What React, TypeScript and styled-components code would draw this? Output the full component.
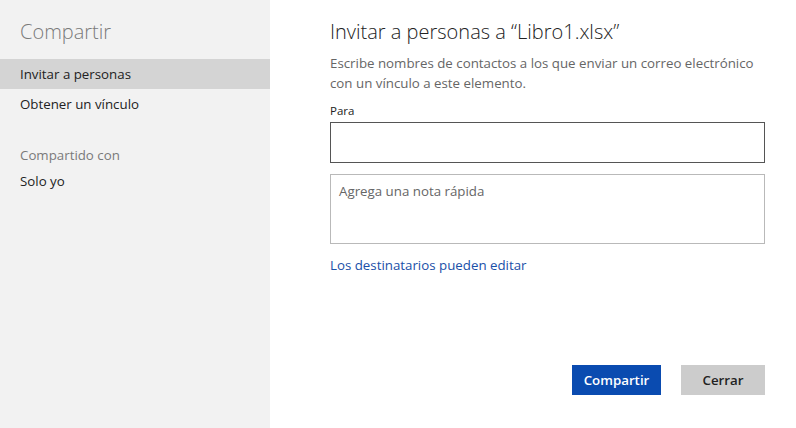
import { createGlobalStyle, styled } from 'styled-components';

const GlobalStyle = createGlobalStyle`
  html, body {
    margin: 0;
    padding: 0;
    background: #ffffff;
  }
  body {
    font-family: 'Open Sans', 'Noto Sans', sans-serif;
  }
  * {
    box-sizing: border-box;
  }
`;

const Page = styled.div`
  display: flex;
  width: 796px;
  height: 428px;
  overflow: hidden;
`;

const Sidebar = styled.nav`
  width: 270px;
  flex-shrink: 0;
  background: #f2f2f2;
  display: flex;
  flex-direction: column;
  padding-top: 16px;
`;

const SideTitle = styled.h2`
  margin: 0 0 11px 20px;
  font-size: 20px;
  font-weight: 300;
  line-height: 32px;
  color: #7a7a7a;
`;

const NavItem = styled.div<{ $active?: boolean }>`
  height: 30px;
  display: flex;
  align-items: center;
  padding-left: 20px;
  font-size: 13.3px;
  color: #222;
  background: ${(p) => (p.$active ? '#d4d4d4' : 'transparent')};
`;

const SectionLabel = styled.div`
  margin: 26px 0 0 20px;
  font-size: 13.3px;
  color: #7a7a7a;
  line-height: 20px;
`;

const SectionValue = styled.div`
  margin: 6px 0 0 20px;
  font-size: 13.3px;
  color: #222;
  line-height: 20px;
`;

const Main = styled.main`
  flex: 1;
  padding: 16px 31px 0 60px;
  display: flex;
  flex-direction: column;
`;

const Title = styled.h1`
  margin: 0;
  font-size: 20px;
  font-weight: 300;
  line-height: 32px;
  color: #222;
`;

const Description = styled.p`
  margin: 5px 0 0;
  font-size: 13.3px;
  line-height: 20px;
  color: #666;
`;

const Label = styled.label`
  display: block;
  margin-top: 10px;
  font-size: 11.5px;
  line-height: 16px;
  color: #222;
`;

const ToField = styled.div`
  margin-top: 3px;
  height: 41px;
  border: 1px solid #555;
  background: #fff;
`;

const NoteField = styled.div`
  margin-top: 11px;
  height: 70px;
  border: 1px solid #b9b9b9;
  padding: 6px 8px;
  font-size: 13.3px;
  line-height: 20px;
  color: #666;
`;

const EditLink = styled.a`
  display: block;
  margin-top: 11px;
  font-size: 13.3px;
  line-height: 20px;
  color: #1a50a8;
  text-decoration: none;
`;

const Actions = styled.div`
  margin-top: auto;
  margin-bottom: 33px;
  display: flex;
  justify-content: flex-end;
  gap: 20px;
`;

const Button = styled.button<{ $primary?: boolean }>`
  height: 30px;
  border: none;
  padding: 0;
  width: ${(p) => (p.$primary ? '89px' : '84px')};
  font-family: inherit;
  font-size: 13.3px;
  font-weight: 600;
  color: ${(p) => (p.$primary ? '#fff' : '#222')};
  background: ${(p) => (p.$primary ? '#0a4bb0' : '#cccccc')};
`;

export default function App() {
  return (
    <>
      <GlobalStyle />
      <Page>
        <Sidebar>
          <SideTitle>Compartir</SideTitle>
          <NavItem $active>Invitar a personas</NavItem>
          <NavItem>Obtener un vínculo</NavItem>
          <SectionLabel>Compartido con</SectionLabel>
          <SectionValue>Solo yo</SectionValue>
        </Sidebar>
        <Main>
          <Title>Invitar a personas a “Libro1.xlsx”</Title>
          <Description>
            Escribe nombres de contactos a los que enviar un correo electrónico
            <br />
            con un vínculo a este elemento.
          </Description>
          <Label>Para</Label>
          <ToField />
          <NoteField>Agrega una nota rápida</NoteField>
          <EditLink href="#">Los destinatarios pueden editar</EditLink>
          <Actions>
            <Button $primary>Compartir</Button>
            <Button>Cerrar</Button>
          </Actions>
        </Main>
      </Page>
    </>
  );
}
